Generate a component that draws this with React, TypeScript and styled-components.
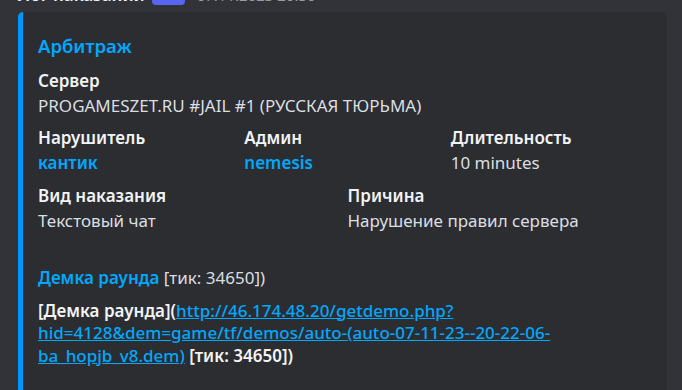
import { FC, ReactNode } from "react";
import styled, { createGlobalStyle } from "styled-components";

const GlobalStyle = createGlobalStyle`
  html, body {
    margin: 0;
    padding: 0;
    background: #313338;
    overflow: hidden;
  }
  body {
    font-family: "Noto Sans", "Open Sans", sans-serif;
    color: #dbdee1;
  }
`;

type Field = {
  name: ReactNode;
  value: ReactNode;
  span: number;
};

const demoUrl =
  "http://46.174.48.20/getdemo.php?hid=4128&dem=game/tf/demos/auto-(auto-07-11-23--20-22-06-ba_hopjb_v8.dem)";

const fields: Field[] = [
  {
    name: "Сервер",
    value: "PROGAMESZET.RU #JAIL #1 (РУССКАЯ ТЮРЬМА)",
    span: 12,
  },
  { name: "Нарушитель", value: <Mention>кантик</Mention>, span: 4 },
  { name: "Админ", value: <Mention>nemesis</Mention>, span: 4 },
  { name: "Длительность", value: "10 minutes", span: 4 },
  { name: "Вид наказания", value: "Текстовый чат", span: 6 },
  { name: "Причина", value: "Нарушение правил сервера", span: 6 },
  {
    name: "\u200b",
    value: (
      <>
        <Mention>Демка раунда</Mention> [тик: 34650])
      </>
    ),
    span: 12,
  },
  {
    name: (
      <>
        [Демка раунда](<Link>{demoUrl}</Link> [тик: 34650])
      </>
    ),
    value: "\u200b",
    span: 12,
  },
];

const App: FC = () => (
  <>
    <GlobalStyle />
    <Message>
      <Header>
        <Username>Лог наказаний</Username>
        <AppTag>APP</AppTag>
        <Timestamp>07.11.2023 20:30</Timestamp>
      </Header>
      <Embed>
        <Title>Арбитраж</Title>
        <Fields>
          {fields.map((f, i) => (
            <FieldBox key={i} span={f.span}>
              <FieldName>{f.name}</FieldName>
              <FieldValue>{f.value}</FieldValue>
            </FieldBox>
          ))}
        </Fields>
      </Embed>
    </Message>
  </>
);

export default App;

const Message = styled.div`
  padding-left: 18px;
  width: 649px;
`;

const Header = styled.div`
  display: flex;
  align-items: center;
  height: 28px;
  margin-top: -19px;
  margin-bottom: 3px;
`;

const Username = styled.span`
  font-size: 17px;
  font-weight: 600;
  color: #f2f3f5;
  line-height: 28px;
`;

const AppTag = styled.span`
  display: inline-flex;
  align-items: center;
  justify-content: center;
  height: 19px;
  width: 33px;
  margin-left: 7px;
  border-radius: 4px;
  background: #5865f2;
  color: #fff;
  font-size: 12px;
  font-weight: 600;
`;

const Timestamp = styled.span`
  margin-left: 12px;
  font-size: 15px;
  color: #949ba4;
`;

const Embed = styled.div`
  box-sizing: border-box;
  width: 649px;
  background: #2b2d31;
  border-left: 5px solid #0096ff;
  border-radius: 5px;
  padding: 10px 20px 20px 15px;
`;

const Title = styled.div`
  margin-top: 10px;
  font-size: 18.5px;
  line-height: 27.5px;
  font-weight: 600;
  color: #00a8fc;
`;

const Fields = styled.div`
  display: grid;
  grid-template-columns: repeat(12, 1fr);
  gap: 10px;
  margin-top: 10px;
`;

const FieldBox = styled.div<{ span: number }>`
  grid-column: span ${(p) => p.span};
  min-width: 0;
`;

const FieldName = styled.div`
  font-size: 17px;
  line-height: 22.5px;
  font-weight: 600;
  color: #f2f3f5;
  margin-bottom: 2.5px;
  overflow-wrap: break-word;
`;

const FieldValue = styled.div`
  font-size: 17px;
  line-height: 22.5px;
  color: #dbdee1;
`;

function Mention({ children }: { children: ReactNode }) {
  return <MentionText>{children}</MentionText>;
}

const MentionText = styled.span`
  color: #00a8fc;
  font-weight: 600;
`;

function Link({ children }: { children: ReactNode }) {
  return <LinkText>{children}</LinkText>;
}

const LinkText = styled.span`
  color: #00a8fc;
  font-weight: 500;
  text-decoration: underline;
`;
